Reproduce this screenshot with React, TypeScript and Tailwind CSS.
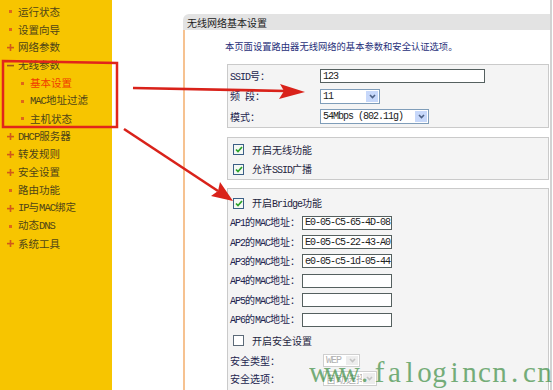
import type { ReactNode } from 'react'

type MenuItem = { label: string; bullet: 'dot' | 'plus' | 'minus'; sub?: boolean; active?: boolean }

const menu: MenuItem[] = [
    { label: '运行状态', bullet: 'dot' },
    { label: '设置向导', bullet: 'dot' },
    { label: '网络参数', bullet: 'plus' },
    { label: '无线参数', bullet: 'minus' },
    { label: '基本设置', bullet: 'dot', sub: true, active: true },
    { label: 'MAC地址过滤', bullet: 'dot', sub: true },
    { label: '主机状态', bullet: 'dot', sub: true },
    { label: 'DHCP服务器', bullet: 'plus' },
    { label: '转发规则', bullet: 'plus' },
    { label: '安全设置', bullet: 'plus' },
    { label: '路由功能', bullet: 'dot' },
    { label: 'IP与MAC绑定', bullet: 'plus' },
    { label: '动态DNS', bullet: 'dot' },
    { label: '系统工具', bullet: 'plus' },
]

const cjk = { fontFamily: '"Noto Sans CJK SC", "Liberation Sans", sans-serif' }
const mono = { fontFamily: '"Liberation Mono", "Noto Sans CJK SC", monospace' }

// 宋体 style: ascii is half width, so ascii runs go in a narrow mono font
const Mixed = ({ text, big = false }: { text: string; big?: boolean }) => (
    <>
        {text.split(/([\x20-\x7e]+)/).map((part, i) =>
            /^[\x20-\x7e]+$/.test(part) ? (
                <span
                    key={i}
                    className={big ? 'text-[10.5px] tracking-[-1px] whitespace-pre' : 'text-[10px] tracking-[-1px] whitespace-pre'}
                    style={mono}
                >
                    {part}
                </span>
            ) : (
                <span key={i}>{part}</span>
            )
        )}
    </>
)

const Bullet = ({ kind }: { kind: MenuItem['bullet'] }) => (
    <svg width="7" height="7" viewBox="0 0 7 7" className="shrink-0">
        {kind === 'dot' && <rect x="2" y="2" width="3" height="3" fill="#e0661a" />}
        {kind === 'plus' && (
            <>
                <rect x="0" y="2.8" width="7" height="1.6" fill="#d2591a" />
                <rect x="2.7" y="0" width="1.6" height="7" fill="#d2591a" />
            </>
        )}
        {kind === 'minus' && <rect x="0" y="2.8" width="7" height="1.6" fill="#a0561a" />}
    </svg>
)

const Sidebar = () => (
    <div className="w-[112px] h-full shrink-0 bg-[#f7c500] pt-[3px]" style={cjk}>
        {menu.map((m) => (
            <div
                key={m.label}
                className={`flex items-center h-[17.85px] text-[10.5px] leading-none gap-[4px] ${m.sub ? 'pl-[19px]' : 'pl-[7px]'}`}
            >
                <Bullet kind={m.bullet} />
                <span className={`whitespace-nowrap ${m.active ? 'text-[#f03c00]' : 'text-[#4f4418]'}`}>
                    <Mixed text={m.label} big />
                </span>
            </div>
        ))}
    </div>
)

const TextBox = ({ value, w }: { value?: string; w: number }) => (
    <div
        className="h-[14px] bg-white border border-[#55605f] flex items-center px-[2px] text-[10px] tracking-[-1px] text-[#222] whitespace-nowrap overflow-hidden"
        style={{ ...mono, width: w }}
    >
        {value}
    </div>
)

const Select = ({ value, w, disabled = false, h = 15 }: { value: string; w: number; disabled?: boolean; h?: number }) => (
    <div
        className={`flex items-stretch bg-white border ${disabled ? 'border-[#cfcfcf] text-[#b0b0b0]' : 'border-[#7f9db9] text-[#222]'}`}
        style={{ width: w, height: h }}
    >
        <div className="flex-1 flex items-center px-[2px] text-[10px] whitespace-nowrap overflow-hidden" style={cjk}>
            <Mixed text={value} />
        </div>
        <div className={`w-[12px] m-[1px] flex items-center justify-center ${disabled ? 'bg-[#ededed]' : 'bg-[#c7d8fa]'}`}>
            <svg width="7" height="5" viewBox="0 0 7 5">
                <path d="M1 1 L3.5 3.5 L6 1" fill="none" stroke={disabled ? '#c4c4c4' : '#4d6185'} strokeWidth="1.6" />
            </svg>
        </div>
    </div>
)

const Check = ({ on }: { on: boolean }) => (
    <div
        className={`w-[11px] h-[11px] shrink-0 border flex items-center justify-center ${on ? 'border-[#3c5f86] bg-[#f4f8f4]' : 'border-[#5c6a78] bg-white'}`}
    >
        {on && (
            <svg width="8" height="7" viewBox="0 0 8 7">
                <path d="M1 3.5 L3 5.5 L7 1" fill="none" stroke="#2aa12a" strokeWidth="1.7" />
            </svg>
        )}
    </div>
)

const Row = ({ label, labelW, h, children }: { label: string; labelW: number; h: number; children?: ReactNode }) => (
    <div className="flex items-center pl-[2px]" style={{ height: h }}>
        <div className="text-[10px] text-[#23244f] whitespace-nowrap shrink-0" style={{ ...cjk, width: labelW }}>
            <Mixed text={label} />
        </div>
        {children}
    </div>
)

const CheckRow = ({ on, label, h }: { on: boolean; label: string; h: number }) => (
    <div className="flex items-center pl-[5px] gap-[8px]" style={{ height: h }}>
        <Check on={on} />
        <span className="text-[10px] text-[#1f1f3f]" style={cjk}>
            <Mixed text={label} />
        </span>
    </div>
)

const Arrows = () => (
    <svg className="absolute inset-0 pointer-events-none" width="553" height="390" viewBox="0 0 553 390">
        <path d="M3 61 L117 63 L117 127 L3 127 Z" fill="none" stroke="#e1251b" strokeWidth="2.5" />
        <path d="M133 88 L286 91" stroke="#d9221a" strokeWidth="2.6" fill="none" />
        <polygon points="280,84 305,92 279,99 284,91" fill="#d9221a" />
        <path d="M124 129 L218 191" stroke="#d9221a" strokeWidth="2.6" fill="none" />
        <polygon points="220,182 233,201 211,196 218,191" fill="#d9221a" />
    </svg>
)

const watermark = 'www.falogincn.cn'

export default function App() {
    return (
        <div className="relative w-[553px] h-[390px] flex bg-white overflow-hidden">
            <Sidebar />
            <div className="ml-[71px] w-[369px] h-full pt-[14px] flex flex-col border-r-2 border-[#d2d2d2]">
                <div
                    className="h-[16px] bg-[#e3e3e3] rounded-tl-[6px] pl-[4px] flex items-center text-[10px] text-[#1b1b1b]"
                    style={cjk}
                >
                    无线网络基本设置
                </div>
                <div className="flex-1 flex flex-col border-l-2 border-[#f6c291] pt-[10px]">
                    <div className="h-[14px] pl-[40px] flex items-center text-[9.3px] text-[#27307a]" style={cjk}>
                        本页面设置路由器无线网络的基本参数和安全认证选项。
                    </div>

                    <div className="ml-[42px] mr-[1px] mt-[10px] border border-[#cacaca] bg-[#f4f4f4] py-[1px]">
                        <Row label="SSID号：" labelW={90} h={20}>
                            <TextBox value="123" w={165} />
                        </Row>
                        <Row label="频 段：" labelW={90} h={20}>
                            <Select value="11" w={60} />
                        </Row>
                        <Row label="模式：" labelW={90} h={20}>
                            <Select value="54Mbps (802.11g)" w={109} />
                        </Row>
                    </div>

                    <div className="ml-[42px] mr-[1px] mt-[9px] border border-[#cacaca] bg-[#f4f4f4] pt-[1px]">
                        <CheckRow on label="开启无线功能" h={20} />
                        <CheckRow on label="允许SSID广播" h={20} />
                    </div>

                    <div className="ml-[42px] mr-[1px] mt-[8px] flex-1 border border-b-0 border-[#cacaca] bg-[#f4f4f4] pt-[4px]">
                        <CheckRow on label="开启Bridge功能" h={20} />
                        <Row label="AP1的MAC地址：" labelW={72} h={19.4}>
                            <TextBox value="E0-05-C5-65-4D-08" w={90} />
                        </Row>
                        <Row label="AP2的MAC地址：" labelW={72} h={19.4}>
                            <TextBox value="E0-05-C5-22-43-A0" w={90} />
                        </Row>
                        <Row label="AP3的MAC地址：" labelW={72} h={19.4}>
                            <TextBox value="e0-05-c5-1d-05-44|" w={90} />
                        </Row>
                        <Row label="AP4的MAC地址：" labelW={72} h={19.4}>
                            <TextBox w={90} />
                        </Row>
                        <Row label="AP5的MAC地址：" labelW={72} h={19.4}>
                            <TextBox w={90} />
                        </Row>
                        <Row label="AP6的MAC地址：" labelW={72} h={19.4}>
                            <TextBox w={90} />
                        </Row>
                        <CheckRow on={false} label="开启安全设置" h={22} />
                        <Row label="安全类型：" labelW={93} h={19}>
                            <Select value="WEP" w={37} h={13} disabled />
                        </Row>
                        <Row label="安全选项：" labelW={93} h={17}>
                            <Select value="自动选择" w={54} h={15} disabled />
                        </Row>
                    </div>
                </div>
            </div>

            <div
                className="absolute left-[312px] top-[358px] flex text-[29px] leading-none text-[#3e8f45] opacity-70"
                style={{ fontFamily: '"Liberation Serif", serif' }}
            >
                {watermark.split('').map((ch, i) => (
                    <span key={i} className="w-[15px] flex justify-center">
                        {ch}
                    </span>
                ))}
            </div>
            <Arrows />
        </div>
    )
}
